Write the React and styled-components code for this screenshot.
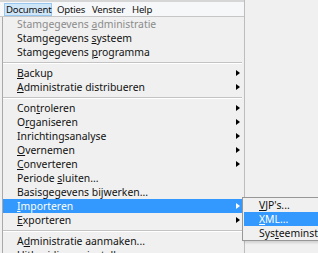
import React from "react";
import styled, { createGlobalStyle, css } from "styled-components";

const Global = createGlobalStyle`
  html, body { margin: 0; padding: 0; background: #f0f0f0; overflow: hidden; }
`;

const Frame = styled.div`
  position: relative;
  display: flex;
  width: 318px;
  height: 253px;
  overflow: hidden;
  background: #f0f0f0;
  font-family: "Noto Sans", "Open Sans", sans-serif;
  font-size: 10.4px;
  letter-spacing: 0;
  color: #111;
`;

const AppPane = styled.div`
  box-sizing: border-box;
  width: 245px;
  border-right: 1px solid #bcbcbc;
  display: flex;
  flex-direction: column;
`;

const Backdrop = styled.div`
  flex: 1;
  background: #f0f0f0;
`;

const MenuBar = styled.div`
  box-sizing: border-box;
  height: 17px;
  border-top: 2px solid #d6d6d6;
  border-bottom: 1px solid #c6c6c6;
  background: #f6f7f8;
  display: flex;
  align-items: stretch;
  padding: 1px 0 0 4px;
  font-size: 9.6px;
  letter-spacing: -0.2px;
`;

const BarItem = styled.div`
  box-sizing: border-box;
  flex: none;
  width: ${(p) => p.$w}px;
  display: flex;
  align-items: center;
  padding-left: ${(p) => p.$padL ?? 4}px;
  white-space: nowrap;
  border: 1px solid transparent;
  ${(p) =>
    p.$open &&
    css`
      background: #cfe5f8;
      border-color: #9ac7ee;
    `}
`;

const Dropdown = styled.div`
  flex: 1;
  margin-left: 2px;
  border-left: 1px solid #a9a9a9;
  background: #f0f0f0;
  display: flex;
  flex-direction: column;
`;

const Item = styled.div`
  height: 14px;
  display: flex;
  align-items: center;
  justify-content: space-between;
  padding: 0 2px 0 14px;
  margin-right: 2px;
  white-space: nowrap;
  color: ${(p) => (p.$disabled ? "#8b8b8b" : "#111")};
  ${(p) =>
    p.$active &&
    css`
      background: #3399ff;
      color: #fff;
    `}
`;

const Separator = styled.div`
  margin: 3px 2px 2px 0;
  border-top: 1px solid #c3c3c3;
  border-bottom: 1px solid #ffffff;
`;

const Arrow = styled.span`
  width: 0;
  height: 0;
  border-left: 4px solid ${(p) => (p.$light ? "#fff" : "#000")};
  border-top: 3px solid transparent;
  border-bottom: 3px solid transparent;
`;

const Accel = styled.span`
  text-decoration: underline;
  text-underline-offset: 1px;
`;

const Submenu = styled.div`
  position: absolute;
  left: 242px;
  top: 197px;
  width: 110px;
  border: 1px solid #979797;
  background: #f0f0f0;
  box-shadow: 2px 2px 2px rgba(0, 0, 0, 0.12);
  display: flex;
  flex-direction: column;
`;

const SubItem = styled.div`
  height: 14px;
  display: flex;
  align-items: center;
  padding-left: 15px;
  margin-left: 1px;
  white-space: nowrap;
  ${(p) =>
    p.$active &&
    css`
      background: #3399ff;
      color: #fff;
    `}
`;

function Label({ text, u }) {
  if (u == null || u < 0) return <span>{text}</span>;
  return (
    <span>
      {text.slice(0, u)}
      <Accel>{text[u]}</Accel>
      {text.slice(u + 1)}
    </span>
  );
}

const menu = [
  { t: "Stamgegevens administratie", u: 13, disabled: true },
  { t: "Stamgegevens systeem", u: 13 },
  { t: "Stamgegevens programma", u: 13 },
  "sep",
  { t: "Backup", u: 0, sub: true },
  { t: "Administratie distribueren", u: 0, sub: true },
  "sep",
  { t: "Controleren", u: 3, sub: true },
  { t: "Organiseren", u: 1, sub: true },
  { t: "Inrichtingsanalyse", u: -1, sub: true },
  { t: "Overnemen", u: 0, sub: true },
  { t: "Converteren", u: 0, sub: true },
  { t: "Periode sluiten...", u: 8 },
  { t: "Basisgegevens bijwerken...", u: 16 },
  { t: "Importeren", u: 0, sub: true, active: true },
  { t: "Exporteren", u: 0, sub: true },
  "sep",
  { t: "Administratie aanmaken...", u: 1 },
  { t: "Uitbreidingen installeren...", u: 2 },
];

const subItems = [
  { t: "VJP's...", u: 0 },
  { t: "XML...", u: 0, active: true },
  { t: "Systeeminstellingen", u: 3 },
];

export default function App() {
  return (
    <>
      <Global />
      <Frame>
        <AppPane>
          <MenuBar>
            <BarItem $open $w={48} $padL={1}>Document</BarItem>
            <BarItem $w={35}>Opties</BarItem>
            <BarItem $w={40}>Venster</BarItem>
            <BarItem $w={36}>Help</BarItem>
          </MenuBar>
          <Dropdown>
            {menu.map((m, i) =>
              m === "sep" ? (
                <Separator key={i} />
              ) : (
                <Item key={i} $disabled={m.disabled} $active={m.active}>
                  <Label text={m.t} u={m.u} />
                  {m.sub && <Arrow $light={m.active} />}
                </Item>
              )
            )}
          </Dropdown>
        </AppPane>
        <Backdrop />
        <Submenu>
          {subItems.map((s, i) => (
            <SubItem key={i} $active={s.active}>
              <Label text={s.t} u={s.u} />
            </SubItem>
          ))}
        </Submenu>
      </Frame>
    </>
  );
}
